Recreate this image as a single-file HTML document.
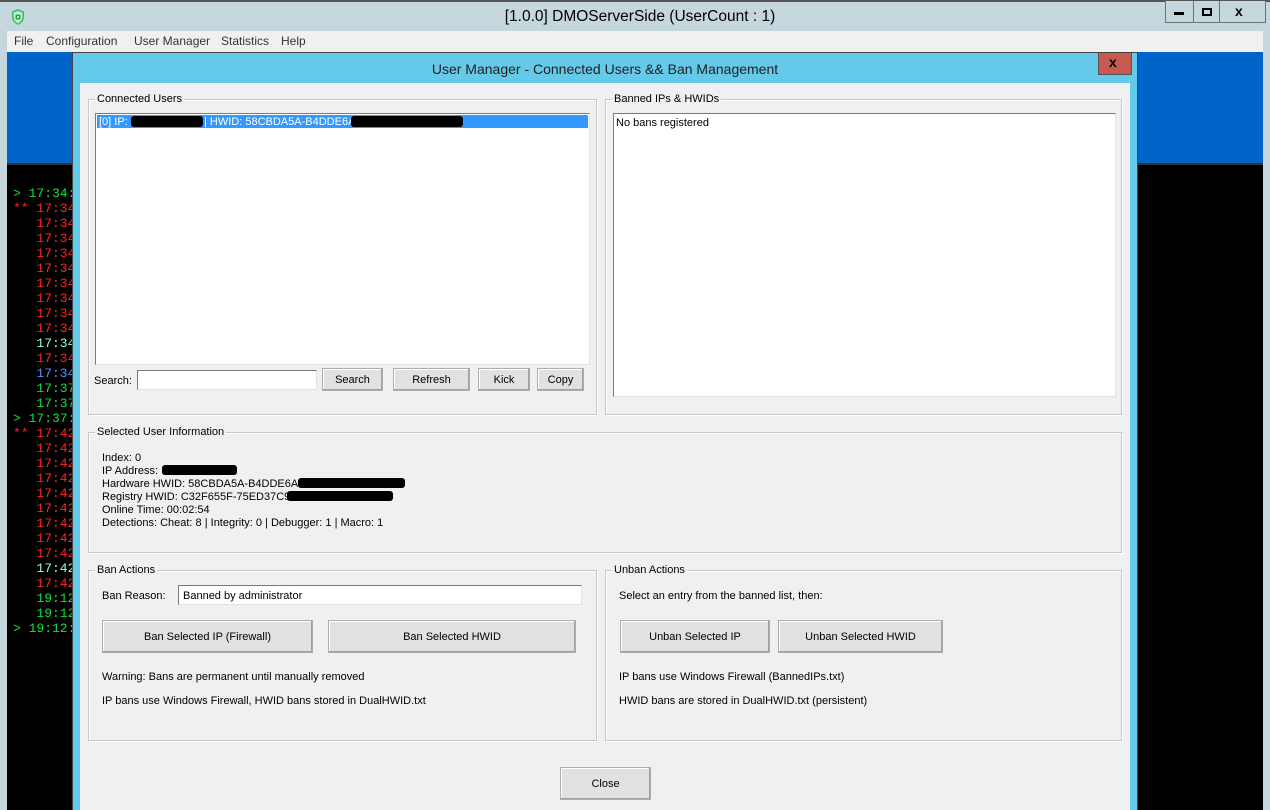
<!DOCTYPE html>
<html><head><meta charset="utf-8"><style>
*{margin:0;padding:0;box-sizing:border-box}
body{width:1270px;height:810px;position:relative;overflow:hidden;background:#c5d7dc;font-family:"Liberation Sans",sans-serif;font-size:11px;color:#000}
.a{position:absolute}
.t{position:absolute;white-space:nowrap;line-height:13px;margin-top:1px}
.grp{position:absolute;border:1px solid #c8c8c8;box-shadow:inset 1px 1px 0 #fff,1px 1px 0 #fff}
.grp>.lab{position:absolute;top:-7px;left:6px;background:#f0f0f0;padding:0 2px;line-height:13px}
.btn{position:absolute;background:#e1e1e1;border:1px solid #adadad;box-shadow:inset -1px -1px 0 #a0a0a0, inset 1px 1px 0 #fff;text-align:center;white-space:nowrap;padding-top:1px}
.box{position:absolute;background:#fff;border:1px solid #7a7a7a;border-right-color:#e3e3e3;border-bottom-color:#e3e3e3}
.con{position:absolute;left:13px;font-family:"Liberation Mono",monospace;font-size:13px;line-height:15px;white-space:pre}
.g{color:#10e040}.r{color:#ff2424}.c{color:#90ffc8}.b{color:#5a8cff}
.red{background:#000;position:absolute;border-radius:3px}
</style></head><body>
<div class="a" style="left:0;top:0;width:1270px;height:2px;background:#555"></div>
<svg class="a" style="left:10px;top:8px" width="16" height="18" viewBox="0 0 16 18"><path d="M8 1 L14 3.5 V9 C14 13 11 15.5 8 17 C5 15.5 2 13 2 9 V3.5 Z" fill="#3ec46a"/><path d="M8 3 L12.3 4.8 V9 C12.3 12 10.3 14 8 15.2 C5.7 14 3.7 12 3.7 9 V4.8 Z" fill="#bff0cf"/><rect x="5.5" y="6.5" width="5" height="5" rx="1" fill="#2ca050"/><rect x="7" y="8" width="2" height="2" fill="#bff0cf"/></svg>
<div class="t" style="left:0;width:1280px;text-align:center;top:7px;font-size:15.5px;line-height:18px;color:#000">[1.0.0] DMOServerSide (UserCount : 1)</div>
<div class="a" style="left:1165px;top:1px;width:101px;height:22px;border:1px solid #707070;border-top:none;background:#c5d7dc"></div>
<div class="a" style="left:1193px;top:1px;width:1px;height:21px;background:#707070"></div>
<div class="a" style="left:1219px;top:1px;width:1px;height:21px;background:#707070"></div>
<div class="a" style="left:1174px;top:12px;width:10px;height:3px;background:#000"></div>
<div class="a" style="left:1202px;top:8px;width:10px;height:8px;border:2px solid #000"></div>
<div class="t" style="left:1235px;top:4px;font-size:14px;font-weight:bold">x</div>
<div class="a" style="left:7px;top:31px;width:1256px;height:21px;background:#f0f0f0"></div>
<div class="t" style="left:14px;top:34px;font-size:12px;color:#333">File</div>
<div class="t" style="left:46px;top:34px;font-size:12px;color:#333">Configuration</div>
<div class="t" style="left:134px;top:34px;font-size:12px;color:#333">User Manager</div>
<div class="t" style="left:221px;top:34px;font-size:12px;color:#333">Statistics</div>
<div class="t" style="left:281px;top:34px;font-size:12px;color:#333">Help</div>
<div class="a" style="left:7px;top:52px;width:1256px;height:111px;background:#0064c8"></div>
<div class="a" style="left:7px;top:163px;width:1256px;height:647px;background:#000"></div>
<div class="a" style="left:7px;top:163px;width:1256px;height:2px;background:#333"></div>
<div class="con g" style="top:186px">&gt; 17:34:</div>
<div class="con r" style="top:201px">** 17:34</div>
<div class="con r" style="top:216px">   17:34</div>
<div class="con r" style="top:231px">   17:34</div>
<div class="con r" style="top:246px">   17:34</div>
<div class="con r" style="top:261px">   17:34</div>
<div class="con r" style="top:276px">   17:34</div>
<div class="con r" style="top:291px">   17:34</div>
<div class="con r" style="top:306px">   17:34</div>
<div class="con r" style="top:321px">   17:34</div>
<div class="con c" style="top:336px">   17:34</div>
<div class="con r" style="top:351px">   17:34</div>
<div class="con b" style="top:366px">   17:34</div>
<div class="con g" style="top:381px">   17:37</div>
<div class="con g" style="top:396px">   17:37</div>
<div class="con g" style="top:411px">&gt; 17:37:</div>
<div class="con r" style="top:426px">** 17:42</div>
<div class="con r" style="top:441px">   17:42</div>
<div class="con r" style="top:456px">   17:42</div>
<div class="con r" style="top:471px">   17:42</div>
<div class="con r" style="top:486px">   17:42</div>
<div class="con r" style="top:501px">   17:42</div>
<div class="con r" style="top:516px">   17:42</div>
<div class="con r" style="top:531px">   17:42</div>
<div class="con r" style="top:546px">   17:42</div>
<div class="con c" style="top:561px">   17:42</div>
<div class="con r" style="top:576px">   17:42</div>
<div class="con g" style="top:591px">   19:12</div>
<div class="con g" style="top:606px">   19:12</div>
<div class="con g" style="top:621px">&gt; 19:12:</div>
<div class="a" style="left:72px;top:52px;width:1066px;height:758px;background:#65c9e9;border-left:1px solid #444;border-right:1px solid #444;border-top:1px solid #444"></div>
<div class="t" style="left:72px;width:1066px;text-align:center;top:60px;font-size:14px;line-height:16px;color:#222">User Manager - Connected Users &amp;&amp; Ban Management</div>
<div class="a" style="left:1098px;top:53px;width:34px;height:22px;background:#c75a50;border:1px solid #555;border-top:none"></div>
<div class="t" style="left:1109px;top:55px;font-size:14px;font-weight:bold">x</div>
<div class="a" style="left:80px;top:83px;width:1050px;height:727px;background:#f0f0f0"></div>

<div class="grp" style="left:88px;top:99px;width:509px;height:316px"><span class="lab">Connected Users</span></div>
<div class="box" style="left:95px;top:113px;width:495px;height:252px"></div>
<div class="a" style="left:97px;top:115px;width:491px;height:13px;background:#3399ff"></div>
<div class="t" style="left:99px;top:115px;color:#fff">[0] IP:</div>
<div class="red" style="left:131px;top:116px;width:72px;height:11px"></div>
<div class="t" style="left:204px;top:115px;color:#fff">| HWID: 58CBDA5A-B4DDE6A5</div>
<div class="red" style="left:351px;top:116px;width:112px;height:11px"></div>
<div class="t" style="left:94px;top:374px">Search:</div>
<div class="box" style="left:137px;top:370px;width:180px;height:20px"></div>
<div class="btn" style="left:322px;top:368px;width:61px;height:23px;line-height:21px">Search</div>
<div class="btn" style="left:393px;top:368px;width:77px;height:23px;line-height:21px">Refresh</div>
<div class="btn" style="left:478px;top:368px;width:52px;height:23px;line-height:21px">Kick</div>
<div class="btn" style="left:537px;top:368px;width:47px;height:23px;line-height:21px">Copy</div>

<div class="grp" style="left:605px;top:99px;width:517px;height:316px"><span class="lab">Banned IPs &amp; HWIDs</span></div>
<div class="box" style="left:613px;top:113px;width:503px;height:284px"></div>
<div class="t" style="left:616px;top:116px">No bans registered</div>

<div class="grp" style="left:88px;top:432px;width:1034px;height:121px"><span class="lab">Selected User Information</span></div>
<div class="t" style="left:102px;top:451px">Index: 0</div>
<div class="t" style="left:102px;top:464px">IP Address:</div>
<div class="red" style="left:162px;top:465px;width:75px;height:10px"></div>
<div class="t" style="left:102px;top:477px">Hardware HWID: 58CBDA5A-B4DDE6A5-</div>
<div class="red" style="left:298px;top:478px;width:107px;height:10px"></div>
<div class="t" style="left:102px;top:490px">Registry HWID: C32F655F-75ED37C9-</div>
<div class="red" style="left:287px;top:491px;width:106px;height:10px"></div>
<div class="t" style="left:102px;top:503px">Online Time: 00:02:54</div>
<div class="t" style="left:102px;top:516px">Detections: Cheat: 8 | Integrity: 0 | Debugger: 1 | Macro: 1</div>

<div class="grp" style="left:88px;top:570px;width:509px;height:171px"><span class="lab">Ban Actions</span></div>
<div class="t" style="left:102px;top:589px">Ban Reason:</div>
<div class="box" style="left:178px;top:585px;width:404px;height:20px"></div>
<div class="t" style="left:183px;top:589px">Banned by administrator</div>
<div class="btn" style="left:102px;top:620px;width:211px;height:33px;line-height:31px">Ban Selected IP (Firewall)</div>
<div class="btn" style="left:328px;top:620px;width:248px;height:33px;line-height:31px">Ban Selected HWID</div>
<div class="t" style="left:102px;top:670px">Warning: Bans are permanent until manually removed</div>
<div class="t" style="left:102px;top:694px">IP bans use Windows Firewall, HWID bans stored in DualHWID.txt</div>

<div class="grp" style="left:605px;top:570px;width:517px;height:171px"><span class="lab">Unban Actions</span></div>
<div class="t" style="left:619px;top:589px">Select an entry from the banned list, then:</div>
<div class="btn" style="left:620px;top:620px;width:150px;height:33px;line-height:31px">Unban Selected IP</div>
<div class="btn" style="left:778px;top:620px;width:165px;height:33px;line-height:31px">Unban Selected HWID</div>
<div class="t" style="left:619px;top:670px">IP bans use Windows Firewall (BannedIPs.txt)</div>
<div class="t" style="left:619px;top:694px">HWID bans are stored in DualHWID.txt (persistent)</div>

<div class="btn" style="left:560px;top:767px;width:91px;height:33px;line-height:31px">Close</div>
<div class="a" style="left:1263px;top:31px;width:7px;height:779px;background:#c5d7dc"></div>
<div class="a" style="left:0;top:31px;width:7px;height:779px;background:#c5d7dc"></div>
</body></html>
